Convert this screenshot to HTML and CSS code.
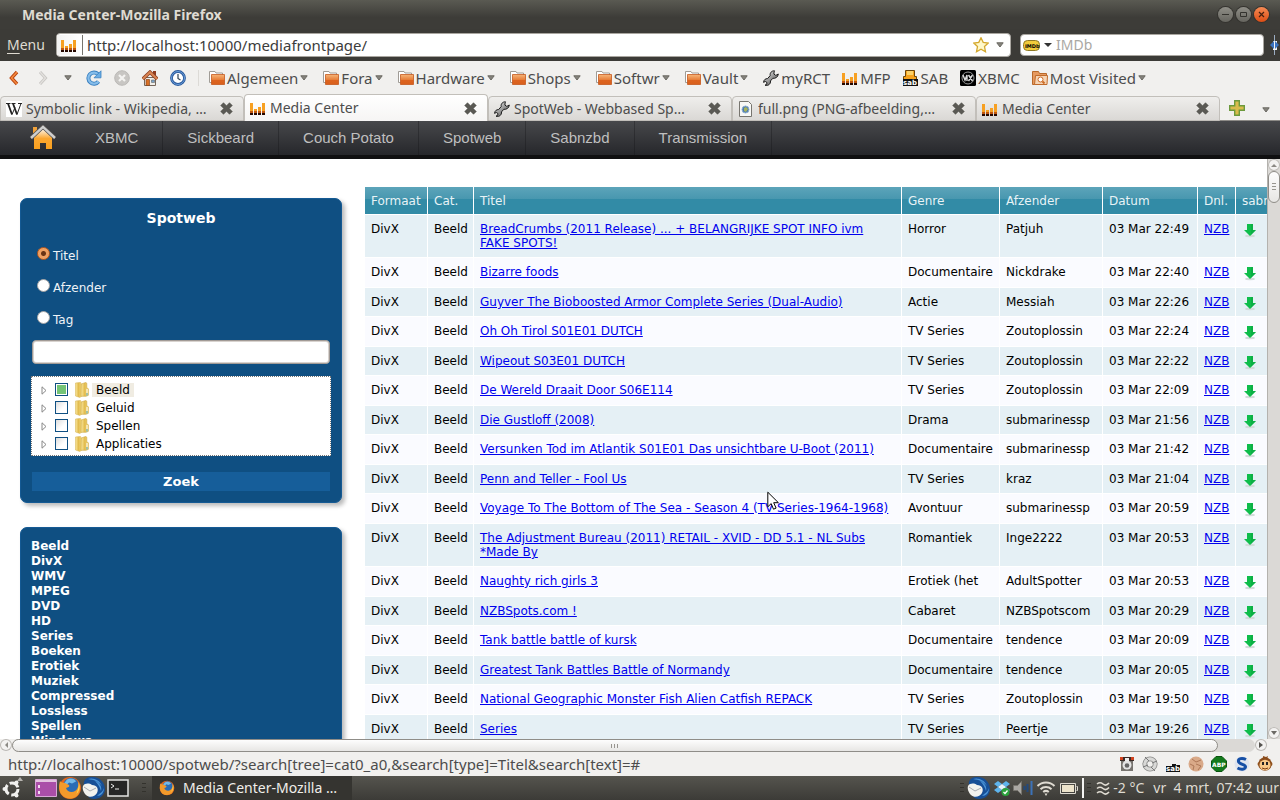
FILE: index.html
```
<!DOCTYPE html>
<html lang="nl">
<head>
    <meta charset="UTF-8">
    <meta name="viewport" content="width=device-width, initial-scale=1.0">
    <title>Media Center</title>
    <link rel="stylesheet" href="styles.css">
</head>
<body>
    <!-- shared icons -->
    <svg class="sprite" aria-hidden="true">
        <defs>
            <linearGradient id="g-folder" x1="0" y1="0" x2="0" y2="1">
                <stop offset="0" stop-color="#f6b67a"/><stop offset=".5" stop-color="#e8813c"/><stop offset=".55" stop-color="#dd6420"/><stop offset="1" stop-color="#d9601c"/>
            </linearGradient>
            <linearGradient id="g-yellow" x1="0" y1="0" x2="1" y2="0">
                <stop offset="0" stop-color="#fbe9a0"/><stop offset=".5" stop-color="#e2bb4d"/><stop offset="1" stop-color="#f3d87c"/>
            </linearGradient>
            <linearGradient id="g-metal" x1="0" y1="0" x2="1" y2="1">
                <stop offset="0" stop-color="#fff"/><stop offset=".5" stop-color="#9a9a9a"/><stop offset="1" stop-color="#444"/>
            </linearGradient>
            <linearGradient id="g-house" x1="0" y1="0" x2="0" y2="1">
                <stop offset="0" stop-color="#fff"/><stop offset=".5" stop-color="#fba731"/><stop offset="1" stop-color="#f9a01e"/>
            </linearGradient>
        </defs>
        <symbol id="i-bars" viewBox="0 0 16 16">
            <path fill="#f7a021" d="M0 3h3v9H0zM4 9h3v3H4zM8 7h3v5H8zM12 3h3v9h-3z"/>
            <path fill="#c0560e" d="M0 11h3v2H0zM4 11h3v2H4zM8 11h3v2H8zM12 11h3v2h-3z"/>
            <path fill="#260800" d="M0 13h3v2H0zM4 13h3v2H4zM8 13h3v2H8zM12 13h3v2h-3z"/>
        </symbol>
        <symbol id="i-folder" viewBox="0 0 16 16">
            <path fill="#fff" stroke="#a09c96" d="M.5 12.500V1.500h5.500l1 1.500h6.500v10z"/>
            <path fill="url(#g-folder)" stroke="#c5581d" stroke-width=".8" d="M2.500 14.500v-10h13v10z"/>
        </symbol>
        <symbol id="i-visited" viewBox="0 0 16 16">
            <path fill="#e69a60" stroke="#b8692b" d="M.5 14.500V1.500h6l1 2h7v2h-2v9z"/>
            <path fill="#f6d4b4" stroke="#c06a2a" d="M2.500 14.500l1-9h12l-.5 9z"/>
            <circle cx="8.500" cy="9.500" r="2.500" fill="#fff" stroke="#cc6b26"/><path stroke="#cc6b26" stroke-width="2" d="M10.500 11.500l2 2"/>
        </symbol>
        <symbol id="i-wrench" viewBox="0 0 16 16">
            <path fill="url(#g-metal)" stroke="#1a1a1a" d="M11.500.8C8.700.6 6.600 3 7.200 5.600L4.600 8.600C2.400 8.500.6 10 .6 12.400l1.700-1 1.700 1.200-.3 1.700-1.700.9c3.400.9 5.700-1.200 5.500-4.300l2.300-2.600c2.700.4 5.200-1.200 5.500-4.300l-2.500 1.400-1.900-1.300.2-2.200z"/>
        </symbol>
        <symbol id="i-close" viewBox="0 0 13 13">
            <path fill="#5a5954" stroke="#45443f" stroke-width=".5" d="M3.500.7l3 3 3-3 2.800 2.800-3 3 3 3-2.800 2.800-3-3-3 3L.7 9.500l3-3-3-3z"/>
        </symbol>
        <symbol id="i-caret" viewBox="0 0 8 6"><path fill="#85837c" stroke="#6b6963" d="M.8.8h6.400L4 5z"/></symbol>
        <symbol id="i-down" viewBox="0 0 12 14">
            <ellipse cx="6" cy="12" rx="5" ry="1.200" fill="#d3dcda"/>
            <path fill="#0fbd4b" d="M3 0h6v6h3l-6 6-6-6h3z"/><path fill="#089d3b" d="M7 0h2v6h3l-5 5z" opacity=".4"/>
        </symbol>
        <symbol id="i-twisty" viewBox="0 0 6 9"><path fill="#fff" stroke="#888" d="M1 .8v7.400l4-3.700z"/></symbol>
        <symbol id="i-book" viewBox="0 0 14 16">
            <path fill="url(#g-yellow)" stroke="#d9b75a" stroke-width=".6" d="M.5 1l5-.6.8 1.500v12.500l-1.500 1L.5 14z"/>
            <path fill="url(#g-yellow)" stroke="#cda63f" stroke-width=".6" d="M6.300 2l4.500-1.600 1 .8v4.600l1.600 1v6.500l-2.400 1H6z"/>
            <path fill="#fff" d="M11.500 7h1v4h-1z"/><path fill="#54b7e8" d="M11.500 11h1v2.500h-1z"/>
        </symbol>
        <symbol id="i-firefox" viewBox="0 0 24 24">
            <circle cx="12" cy="12" r="11" fill="#e2661b"/><circle cx="13" cy="10" r="8" fill="#2a6cb5"/>
            <path fill="#73b8e6" d="M9 3.500c4-2 8-.5 9 2l-4 2-3-1-2 2-3-1z"/>
            <path fill="#f39a2b" d="M2 5c1 2 3 1.500 5 2l4 2c1 2-1 2.500-3 3 1 4 6 5 9 3 3-2 4-6 3-9 3 4 3 10-1 14-5 4-12 3-15-1C1 16 .5 10 2 5z"/>
            <path fill="#ffd553" d="M20.500 6c2 4 1 9-2 12 1-4 3-7 2-12z"/>
        </symbol>
        <symbol id="i-bird" viewBox="0 0 24 24">
            <path fill="#174f96" d="M2 9C1 5 4 1 9 1c8-1 14 5 14 12 0 6-5 10-11 10-3 0-5-1-6-3 6-2 8-5 4-9z"/>
            <path fill="#4a93d6" d="M6 3c5-2 12 1 14 7-4-5-8-6-14-7zM22 12c0 5-3 8-7 8 3-3 6-4 7-8zM13 5c5 2 7 6 6 10-1-4-3-7-6-10z"/>
            <path fill="#f2f2ee" d="M1 10c2-3 6-3 9-1 5 0 7 4 5 8-2 4-8 5-11 2-2-2-4-6-3-9z"/>
            <path fill="none" stroke="#a7aab0" d="M2 11l6 4 6-3"/>
        </symbol>
        <symbol id="i-handle" viewBox="0 0 4 12"><path fill="#33322d" d="M0 1h4v1H0zM0 5h4v1H0zM0 9h4v1H0z"/></symbol>
    </svg>

    <header class="titlebar">
        <h1 class="window-title">Media Center-Mozilla Firefox</h1>
        <div class="window-buttons">
            <button class="win-btn" aria-label="Minimaliseren"><svg viewBox="0 0 15 15"><path stroke="#33322e" d="M4 7.500h7"/></svg></button>
            <button class="win-btn" aria-label="Maximaliseren"><svg viewBox="0 0 15 15"><path fill="none" stroke="#33322e" d="M4.500 5.500h6v4h-6z"/></svg></button>
            <button class="win-btn win-close" aria-label="Sluiten"><svg viewBox="0 0 15 15"><path stroke="#47200f" stroke-width="1.200" d="M5 5l5 5M10 5l-5 5"/></svg></button>
        </div>
    </header>

    <div class="locationbar">
        <button class="menu-btn"><u>M</u>enu</button>
        <div class="url-box">
            <span class="favicon"><svg class="icon"><use href="#i-bars"/></svg></span>
            <input class="url-input" type="text" aria-label="Adres" value="http://localhost:10000/mediafrontpage/">
            <svg class="icon" viewBox="0 0 16 16"><path fill="#fff8c9" stroke="#d4a82e" stroke-width="1.300" d="M8 .8l2.200 4.600 5 .6-3.700 3.500 1 5.200L8 12.300l-4.500 2.400 1-5.200L.8 6l5-.6z"/></svg>
            <svg class="caret"><use href="#i-caret"/></svg>
        </div>
        <div class="search-box">
            <svg class="imdb" viewBox="0 0 17 11"><rect x=".5" y=".5" width="16" height="10" rx="4" fill="#f2cb3b" stroke="#8f7a24"/><text x="2" y="8">IMDb</text></svg>
            <svg class="caret" viewBox="0 0 8 6"><path fill="#333" d="M0 1h8L4 5z"/></svg>
            <input class="search-input" type="text" aria-label="Zoeken" placeholder="IMDb">
        </div>
        <svg class="spinner" viewBox="0 0 9 20"><path stroke="#9cadc2" d="M4.500 0v20"/><path fill="#f5f5f5" d="M3 6h4v9H3z"/><path fill="#3a72c0" d="M0 10l4-4v8zM9 10L5 6v8z"/></svg>
    </div>

    <nav class="bookmarks" aria-label="Bladwijzers">
        <div class="nav-tools">
            <button aria-label="Vorige"><svg class="icon" viewBox="0 0 16 16"><path fill="none" stroke="#b94510" stroke-width="3.400" d="M11 2L5.500 8l5.500 6"/><path fill="none" stroke="#f5893e" stroke-width="1.600" d="M11 2L5.500 8l5.500 6"/></svg></button>
            <button aria-label="Volgende"><svg class="icon" viewBox="0 0 16 16"><path fill="none" stroke="#c8c6c3" stroke-width="3" d="M6 2l5.500 6L6 14"/><path fill="none" stroke="#e3e1de" stroke-width="1.200" d="M6 2l5.500 6L6 14"/></svg></button>
            <button class="history" aria-label="Geschiedenis"><svg class="caret"><use href="#i-caret"/></svg></button>
            <button aria-label="Vernieuwen"><svg class="icon" viewBox="0 0 16 16"><path fill="none" stroke="#3a80c0" stroke-width="4" d="M12.500 11.500A5.600 5.600 0 1 1 12 4.200"/><path fill="none" stroke="#86bdea" stroke-width="2.200" d="M12.500 11.500A5.600 5.600 0 1 1 12 4.200"/><path fill="#6caee4" stroke="#3a80c0" stroke-width=".8" d="M15 .8v7H8z"/></svg></button>
            <button aria-label="Stoppen"><svg class="icon" viewBox="0 0 16 16"><circle cx="8" cy="8" r="7.300" fill="#c8c6c3" stroke="#bbb9b6"/><path stroke="#f4f3f1" stroke-width="2.200" d="M5 5l6 6M11 5l-6 6"/></svg></button>
            <button aria-label="Startpagina"><svg class="icon" viewBox="0 0 16 16"><path fill="#8f3b1e" d="M11 1h3v5h-3z"/><path fill="#f2efe9" stroke="#75675b" d="M2.500 7.500h11v8h-11z"/><path fill="none" stroke="#8b4023" stroke-width="3.600" d="M.8 9L8 2.200 15.200 9"/><path fill="none" stroke="#d98452" stroke-width="2" d="M.8 9L8 2.200 15.200 9"/><path fill="#d87025" stroke="#7c3a14" stroke-width=".6" d="M4 9.500h3.500v6H4z"/><path fill="#78a5cd" stroke="#666" stroke-width=".6" d="M9.500 10h3v2.500h-3z"/></svg></button>
            <button aria-label="Klok"><svg class="icon" viewBox="0 0 16 16"><circle cx="8" cy="8" r="6.500" fill="#fff" stroke="#2a5a9d" stroke-width="2.800"/><circle cx="8" cy="8" r="6.500" fill="none" stroke="#6d9fda"/><path fill="none" stroke="#345" stroke-width="1.200" d="M8 4v4.500l2.500 1.500"/></svg></button>
        </div>
        <div class="bookmark-list">
            <a href="#"><svg class="icon"><use href="#i-folder"/></svg>Algemeen<svg class="caret"><use href="#i-caret"/></svg></a>
            <a href="#"><svg class="icon"><use href="#i-folder"/></svg>Fora<svg class="caret"><use href="#i-caret"/></svg></a>
            <a href="#"><svg class="icon"><use href="#i-folder"/></svg>Hardware<svg class="caret"><use href="#i-caret"/></svg></a>
            <a href="#"><svg class="icon"><use href="#i-folder"/></svg>Shops<svg class="caret"><use href="#i-caret"/></svg></a>
            <a href="#"><svg class="icon"><use href="#i-folder"/></svg>Softwr<svg class="caret"><use href="#i-caret"/></svg></a>
            <a href="#"><svg class="icon"><use href="#i-folder"/></svg>Vault<svg class="caret"><use href="#i-caret"/></svg></a>
            <a href="#"><svg class="icon"><use href="#i-wrench"/></svg>myRCT</a>
            <a href="#"><svg class="icon"><use href="#i-bars"/></svg>MFP</a>
            <a href="#"><svg class="icon" viewBox="0 0 16 16"><path fill="#f6a21c" stroke="#6b4307" d="M2.500.5h9v6h2v3h-13v-3h2z"/><path fill="#fbd168" d="M4 1h6v4H4z"/><path fill="#111" d="M0 9h15v7H0z"/><text class="tiny" x="0" y="15">sab</text></svg>SAB</a>
            <a href="#"><svg class="icon" viewBox="0 0 16 16"><rect width="16" height="16" rx="1.500" fill="#000"/><circle cx="8" cy="8" r="6" fill="none" stroke="#999"/><path fill="none" stroke="#ddd" stroke-width="1.400" d="M3 5l2 5 2-5v6M8.500 5l4 6M12.500 5l-4 6"/></svg>XBMC</a>
            <a href="#"><svg class="icon"><use href="#i-visited"/></svg>Most Visited<svg class="caret"><use href="#i-caret"/></svg></a>
        </div>
    </nav>

    <div class="tabs" role="tablist">
        <div class="tab" role="tab"><svg class="icon" viewBox="0 0 16 16"><path fill="#fff" d="M0 0h16v16H0z"/><path fill="none" stroke="#222" stroke-width="1.800" d="M2 2.500l4 11M7 2.500l4 11"/><path fill="none" stroke="#222" d="M6 13.500l3-7M11 13.500l4-11M0 2.500h4.500M5.500 2.500h4M12 2.500h4"/></svg><span>Symbolic link - Wikipedia, …</span><button aria-label="Sluit tab"><svg><use href="#i-close"/></svg></button></div>
        <div class="tab active" role="tab" aria-selected="true"><svg class="icon"><use href="#i-bars"/></svg><span>Media Center</span><button aria-label="Sluit tab"><svg><use href="#i-close"/></svg></button></div>
        <div class="tab" role="tab"><svg class="icon"><use href="#i-wrench"/></svg><span>SpotWeb - Webbased Sp…</span><button aria-label="Sluit tab"><svg><use href="#i-close"/></svg></button></div>
        <div class="tab" role="tab"><svg class="icon" viewBox="0 0 16 16"><path fill="#f8f8f6" stroke="#77756f" d="M1.500.5h9l3 3v12h-12z"/><circle cx="7.500" cy="8.500" r="3.500" fill="#4a78ae" stroke="#8fb0d2"/><path fill="#a9b45a" d="M6 7l2-1 2 2-2 3-2-1z"/></svg><span>full.png (PNG-afbeelding,…</span><button aria-label="Sluit tab"><svg><use href="#i-close"/></svg></button></div>
        <div class="tab" role="tab"><svg class="icon"><use href="#i-bars"/></svg><span>Media Center</span><button aria-label="Sluit tab"><svg><use href="#i-close"/></svg></button></div>
        <button class="new-tab" aria-label="Nieuwe tab"><svg class="icon" viewBox="0 0 16 16"><path fill="#d9bc4c" stroke="#6c9a3c" stroke-width="1.400" d="M5.700.7h4.600v5h5v4.600h-5v5H5.700v-5h-5V5.700h5z"/></svg></button>
        <button class="all-tabs" aria-label="Alle tabs"><svg class="caret"><use href="#i-caret"/></svg></button>
    </div>

    <nav class="sitenav" aria-label="Hoofdmenu">
        <a class="home" href="#" aria-label="Home"><svg viewBox="0 0 26 24"><path fill="#f0a23a" d="M3 2h4v6H3z"/><path fill="url(#g-house)" d="M13 3l9 9v12h-6v-6h-6v6H4V12z"/><path fill="none" stroke="#55524f" stroke-width="4" d="M1 13L13 1.800 25 13"/><path fill="none" stroke="#cfcfcf" stroke-width="2.400" d="M1 13L13 1.800 25 13"/></svg></a>
        <a href="#">XBMC</a>
        <a href="#">Sickbeard</a>
        <a href="#">Couch Potato</a>
        <a href="#">Spotweb</a>
        <a href="#">Sabnzbd</a>
        <a href="#">Transmission</a>
    </nav>

    <div class="viewport">
        <div class="page">
            <aside class="sidebar">
                <form class="panel search-panel" onsubmit="return false">
                    <h2>Spotweb</h2>
                    <label class="choice"><input type="radio" name="type" checked>Titel</label>
                    <label class="choice"><input type="radio" name="type">Afzender</label>
                    <label class="choice"><input type="radio" name="type">Tag</label>
                    <input class="text" type="text" aria-label="Zoektekst">
                    <div class="tree">
                        <label class="node selected"><svg class="twisty"><use href="#i-twisty"/></svg><input type="checkbox" class="partial"><svg class="book"><use href="#i-book"/></svg><span>Beeld</span></label>
                        <label class="node"><svg class="twisty"><use href="#i-twisty"/></svg><input type="checkbox"><svg class="book"><use href="#i-book"/></svg><span>Geluid</span></label>
                        <label class="node"><svg class="twisty"><use href="#i-twisty"/></svg><input type="checkbox"><svg class="book"><use href="#i-book"/></svg><span>Spellen</span></label>
                        <label class="node"><svg class="twisty"><use href="#i-twisty"/></svg><input type="checkbox"><svg class="book"><use href="#i-book"/></svg><span>Applicaties</span></label>
                    </div>
                    <button class="submit">Zoek</button>
                </form>
                <ul class="panel filters">
                    <li><a href="#">Beeld</a></li>
                    <li><a href="#">DivX</a></li>
                    <li><a href="#">WMV</a></li>
                    <li><a href="#">MPEG</a></li>
                    <li><a href="#">DVD</a></li>
                    <li><a href="#">HD</a></li>
                    <li><a href="#">Series</a></li>
                    <li><a href="#">Boeken</a></li>
                    <li><a href="#">Erotiek</a></li>
                    <li><a href="#">Muziek</a></li>
                    <li><a href="#">Compressed</a></li>
                    <li><a href="#">Lossless</a></li>
                    <li><a href="#">Spellen</a></li>
                    <li><a href="#">Windows</a></li>
                </ul>
            </aside>

            <main class="spots">
                <table>
                    <colgroup>
                        <col class="c-format"><col class="c-cat"><col class="c-title"><col class="c-genre"><col class="c-sender"><col class="c-date"><col class="c-nzb"><col class="c-sab">
                    </colgroup>
                    <thead>
                        <tr><th>Formaat</th><th>Cat.</th><th>Titel</th><th>Genre</th><th>Afzender</th><th>Datum</th><th>Dnl.</th><th>sabnzbd</th></tr>
                    </thead>
                    <tbody id="spots"></tbody>
                </table>
            </main>
        </div>
        <div class="vscroll">
            <svg class="arrow" viewBox="0 0 12 12"><path fill="#8c8a85" d="M3 8h6L6 5z"/></svg>
            <div class="thumb"><svg viewBox="0 0 8 8"><path stroke="#97958f" d="M2 .5h4M2 3.500h4M2 6.500h4"/></svg></div>
            <svg class="arrow end" viewBox="0 0 12 12"><path fill="#6c6a65" d="M3 4h6L6 8z"/></svg>
        </div>
    </div>
    <div class="hscroll">
        <svg class="arrow" viewBox="0 0 12 12"><path fill="#8c8a85" d="M8 3v6L5 6z"/></svg>
        <div class="track"><div class="thumb"><svg viewBox="0 0 8 8"><path stroke="#97958f" d="M.5 2v4M3.500 2v4M6.500 2v4"/></svg></div></div>
        <svg class="arrow end" viewBox="0 0 12 12"><path fill="#55534f" d="M4 3v6l4-3z"/></svg>
    </div>

    <div class="statusbar">
        <span>http://localhost:10000/spotweb/?search[tree]=cat0_a0,&amp;search[type]=Titel&amp;search[text]=#</span>
        <div class="addons">
            <svg viewBox="0 0 16 16"><path fill="#77746f" d="M2 3h12v12H2z"/><path fill="#3a2a26" d="M1 1h14v4H1z"/><path fill="#d0421f" d="M1 1h3v3H1zM12 1h3v3h-3z"/><circle cx="8" cy="9" r="4.500" fill="#e4e4e4"/><circle cx="8" cy="9.500" r="2.300" fill="#666"/><path fill="#eee" d="M6 2h4v3H6z"/></svg>
            <svg viewBox="0 0 16 16"><circle cx="8" cy="8" r="5.200" fill="none" stroke="#8a8a88" stroke-width="4.800"/><circle cx="8" cy="8" r="5.200" fill="none" stroke="#d9d9d7" stroke-width="3.200"/><path stroke="#777" d="M3 1l4 4M13 15l-4-4M1 11l5-2M15 5l-5 2"/></svg>
            <svg viewBox="0 0 16 16"><path fill="#111" d="M1 10h6V8h4v1h4v7H1z"/><text class="tiny" x="1" y="15">sab</text></svg>
            <svg viewBox="0 0 16 16"><circle cx="8" cy="8" r="7.500" fill="#d9a988"/><path fill="none" stroke="#ad7757" d="M4 3l4 3 5-2M2 8l4 2-1 4M8 8l5 2-3 4"/></svg>
            <svg viewBox="0 0 16 16"><path fill="#137a1c" stroke="#09540f" d="M5 .5h6L15.500 5v6L11 15.500H5L.5 11V5z"/><text class="abp" x="1" y="11">ABP</text></svg>
            <svg viewBox="0 0 16 16"><circle cx="8" cy="8" r="7.500" fill="#dfe4ee"/><path fill="none" stroke="#164fa5" stroke-width="3" d="M12 3.500C8 1.500 4 2.500 4.500 5.500S12 8.500 11.500 11 7 14 3.500 12"/></svg>
            <svg viewBox="0 0 16 16"><circle cx="2.500" cy="8" r="2" fill="#9a5a22"/><circle cx="13.500" cy="8" r="2" fill="#9a5a22"/><circle cx="8" cy="8" r="6.800" fill="#8c4d1c"/><ellipse cx="8" cy="9" rx="5.500" ry="5.200" fill="#f7c887"/><path fill="#222" d="M5 6h2v3H5zM9 6h2v3H9z"/><path fill="none" stroke="#7a3b10" d="M5 12q3 2 6 0"/><path fill="#8c4d1c" d="M6 0l3 1 2-1-1 3H6z"/></svg>
        </div>
    </div>

    <footer class="taskbar">
        <button class="launcher" aria-label="Ubuntu"><svg viewBox="0 0 24 24"><circle cx="12" cy="13" r="6" fill="none" stroke="#f0f0ee" stroke-width="3" stroke-dasharray="10 2.560"/><circle cx="4.500" cy="13" r="2" fill="#f0f0ee"/><circle cx="16.500" cy="6.500" r="2" fill="#f0f0ee"/><circle cx="16.500" cy="19.500" r="2" fill="#f0f0ee"/><path fill="#b7b5b0" d="M17 5l3-4 3 4z"/></svg></button>
        <button class="launcher" aria-label="Bestanden"><svg viewBox="0 0 24 24"><path fill="#aa4ea8" stroke="#d8a7d7" d="M1.500 3.500h21v17h-21z"/><path fill="#e3c4e0" d="M2 4h20v2H2z"/><path fill="#f0d8ee" d="M4 9h2v3H4zM4 15h2v3H4z"/></svg></button>
        <button class="launcher" aria-label="Firefox"><svg><use href="#i-firefox"/></svg></button>
        <button class="launcher" aria-label="Thunderbird"><svg><use href="#i-bird"/></svg></button>
        <button class="launcher" aria-label="Terminal"><svg viewBox="0 0 24 24"><path fill="#262626" stroke="#e4e4e2" stroke-width="1.500" d="M2 4h20v16H2z"/><path fill="none" stroke="#eee" d="M5 8l3 2-3 2M9 13h4"/></svg></button>
        <svg class="handle"><use href="#i-handle"/></svg>
        <button class="task"><svg class="icon"><use href="#i-firefox"/></svg><span>Media Center-Mozilla …</span></button>
        <div class="tray">
            <svg class="handle"><use href="#i-handle"/></svg>
            <svg class="big"><use href="#i-bird"/></svg>
            <svg class="icon" viewBox="0 0 16 16"><path fill="#5eb5ee" d="M4 1l4 3-4 3-4-3zM12 1l4 3-4 3-4-3zM4 7l4 3-4 3-4-3zM12 7l4 3-4 3-4-3z"/><path fill="#e8f5fd" d="M8 4l4 3-4 3-4-3z"/><circle cx="11.500" cy="12" r="4" fill="#2aa33b"/><path fill="none" stroke="#fff" stroke-width="1.300" d="M9.500 12l1.500 1.500 2.500-3"/></svg>
            <svg class="wide" viewBox="0 0 20 16"><path fill="#aaa8a3" stroke="#77756f" d="M.5 5.500h4l4-4v13l-4-4h-4z"/><path stroke="#22497c" stroke-width="2" d="M11.500 6v4M14.500 4v8"/><path stroke="#3c72b8" stroke-width="2" d="M18.500 1v14"/></svg>
            <svg class="wide" viewBox="0 0 20 16"><path fill="none" stroke="#dfdbd2" stroke-width="2" d="M1.500 6a12 12 0 0 1 17 0M4.500 9.200a8 8 0 0 1 11 0M7.200 12a4.500 4.500 0 0 1 5.600 0"/><path fill="#dfdbd2" d="M8.500 13.500h3L10 16z"/></svg>
            <svg class="wide" viewBox="0 0 20 16"><path fill="#ece3cb" d="M3 5h12v7H3z"/><path fill="none" stroke="#dfdbd2" d="M1.500 3.500h15v10h-15zM17.500 6.500h1v4h-1"/></svg>
            <span class="marker"></span>
            <svg class="handle"><use href="#i-handle"/></svg>
            <svg class="waves" viewBox="0 0 14 14"><path fill="none" stroke="#dfdbd2" stroke-width="1.600" d="M1 3q3-2.500 6 0t6-1M1 7.500q3-2.500 6 0t6-1M1 12q3-2.500 6 0t6-1"/></svg>
            <span>-2 °C</span>
            <time class="clock">vr&nbsp; 4 mrt, 07:42 uur</time>
        </div>
    </footer>

    <svg class="cursor" viewBox="0 0 12 20"><path fill="#fff" stroke="#000" d="M.8 1.200v14.600l3.400-3.200 2.300 5.600 2.600-1.100-2.400-5.400h4.700z"/></svg>

    <script>
        // titel, genre, afzender, tijd
        const spots = [
            ['BreadCrumbs (2011 Release) ... + BELANGRIJKE SPOT INFO ivm FAKE SPOTS!', 'Horror', 'Patjuh', '22:49'],
            ['Bizarre foods', 'Documentaire', 'Nickdrake', '22:40'],
            ['Guyver The Bioboosted Armor Complete Series (Dual-Audio)', 'Actie', 'Messiah', '22:26'],
            ['Oh Oh Tirol S01E01 DUTCH', 'TV Series', 'Zoutoplossin', '22:24'],
            ['Wipeout S03E01 DUTCH', 'TV Series', 'Zoutoplossin', '22:22'],
            ['De Wereld Draait Door S06E114', 'TV Series', 'Zoutoplossin', '22:09'],
            ['Die Gustloff (2008)', 'Drama', 'submarinessp', '21:56'],
            ['Versunken Tod im Atlantik S01E01 Das unsichtbare U-Boot (2011)', 'Documentaire', 'submarinessp', '21:42'],
            ['Penn and Teller - Fool Us', 'TV Series', 'kraz', '21:04'],
            ['Voyage To The Bottom of The Sea - Season 4 (TV Series-1964-1968)', 'Avontuur', 'submarinessp', '20:59'],
            ['The Adjustment Bureau (2011) RETAIL - XVID - DD 5.1 - NL Subs *Made By', 'Romantiek', 'Inge2222', '20:53'],
            ['Naughty rich girls 3', 'Erotiek (het', 'AdultSpotter', '20:53'],
            ['NZBSpots.com !', 'Cabaret', 'NZBSpotscom', '20:29'],
            ['Tank battle battle of kursk', 'Documentaire', 'tendence', '20:09'],
            ['Greatest Tank Battles Battle of Normandy', 'Documentaire', 'tendence', '20:05'],
            ['National Geographic Monster Fish Alien Catfish REPACK', 'TV Series', 'Zoutoplossin', '19:50'],
            ['Series', 'TV Series', 'Peertje', '19:26']
        ];
        const tableBody = document.getElementById('spots');

        spots.forEach(([title, genre, sender, time]) => {
            const row = document.createElement('tr');
            row.innerHTML = `
                <td>DivX</td>
                <td>Beeld</td>
                <td><a href="#">${title}</a></td>
                <td>${genre}</td>
                <td>${sender}</td>
                <td>03 Mar ${time}</td>
                <td><a href="#">NZB</a></td>
                <td><a href="#" aria-label="Download"><svg class="dl"><use href="#i-down"/></svg></a></td>
            `;
            tableBody.appendChild(row);
        });
    </script>
</body>
</html>
```

FILE: styles.css
```
* {
    box-sizing: border-box;
}
body {
    display: flex;
    flex-direction: column;
    height: 100vh;
    margin: 0;
    overflow: hidden;
    font-family: "Noto Sans", "Open Sans", sans-serif;
    font-size: 14px;
    line-height: 20px;
    color: #4c4c4c;
    background: #fff;
}
button {
    display: flex;
    align-items: center;
    padding: 0;
    border: none;
    background: none;
    font: inherit;
    color: inherit;
}
svg {
    display: block;
    flex: none;
}
.sprite {
    position: absolute;
    width: 0;
    height: 0;
}
.icon {
    width: 16px;
    height: 16px;
}
.caret {
    width: 8px;
    height: 6px;
}
.tiny {
    font: bold 7px "DejaVu Sans", sans-serif;
    fill: #fff;
}

/* window */
.titlebar {
    display: flex;
    flex: none;
    align-items: center;
    justify-content: space-between;
    height: 29px;
    padding: 0 11px 0 22px;
    background: linear-gradient(#5a5a52, #3d3c38 60%);
}
.window-title {
    margin: 0;
    font-size: 14px;
    color: #dfdbd2;
}
.window-buttons {
    display: flex;
    gap: 3px;
}
.win-btn {
    width: 15px;
    height: 15px;
    border-radius: 50%;
    background: linear-gradient(#8f8e87, #66655f);
    box-shadow: 0 0 0 1px #34332f;
}
.win-close {
    background: linear-gradient(#f58a54, #dd4d14);
}
.locationbar {
    display: flex;
    flex: none;
    align-items: center;
    height: 32px;
    padding-left: 7px;
    background: #3c3b37;
}
.menu-btn {
    width: 49px;
    color: #dfdbd2;
}
.menu-btn u {
    text-underline-offset: 3px;
}
.url-box,
.search-box {
    display: flex;
    align-items: center;
    background: #fff;
    border: 1px solid #a9a6a0;
    border-radius: 4px;
}
.url-box {
    flex: 1;
    gap: 7px;
    height: 24px;
    padding-right: 6px;
}
.favicon {
    padding: 2px 5px 2px 4px;
    border-right: 1px solid #77756f;
    background: linear-gradient(90deg, #f2f2f1, #fff);
}
.url-input,
.search-input {
    flex: 1;
    min-width: 0;
    padding: 0;
    border: none;
    outline: none;
    background: none;
    font: inherit;
    color: #3c3c3c;
}
.url-input {
    margin-left: -3px;
    font-size: 15px;
}
.search-input::placeholder {
    color: #aaa8a3;
}
.search-box {
    flex: 0 1 244px;
    gap: 4px;
    height: 22px;
    margin: 0 6px 0 9px;
    padding-left: 2px;
}
.imdb {
    width: 17px;
    height: 11px;
}
.imdb text {
    font: bold 5px "DejaVu Sans", sans-serif;
}
.spinner {
    width: 9px;
    height: 20px;
    margin-right: 1px;
}

/* bookmarks */
.bookmarks {
    display: flex;
    flex: none;
    align-items: center;
    height: 33px;
    padding-left: 6px;
    background: #f1f0ee;
    font-size: 15px;
}
.nav-tools {
    display: flex;
    align-items: center;
    gap: 12px;
    padding-right: 12px;
    border-right: 1px solid #dcdad6;
}
.history {
    padding: 0 2px;
}
.bookmark-list {
    display: flex;
    gap: 12px;
    padding-left: 10px;
    white-space: nowrap;
}
.bookmark-list a {
    display: flex;
    align-items: center;
    gap: 2px;
    color: inherit;
    text-decoration: none;
}
.bookmark-list .caret {
    margin-right: 3px;
}

/* tabs */
.tabs {
    display: flex;
    flex: none;
    align-items: flex-end;
    height: 27px;
    background: #f1f0ee;
    box-shadow: inset 0 -1px #8c8a86;
}
.tab {
    display: flex;
    flex: 0 1 244px;
    align-items: center;
    gap: 4px;
    min-width: 0;
    height: 25px;
    padding: 0 10px 0 5px;
    border: 1px solid #c2bfba;
    border-radius: 4px 4px 0 0;
    background: linear-gradient(#efeeec, #dad8d5);
}
.tab.active {
    height: 27px;
    border-bottom: none;
    background: linear-gradient(#fff, #f6f5f4);
}
.tab span {
    flex: 1;
    overflow: hidden;
    text-overflow: ellipsis;
    white-space: nowrap;
}
.tab button svg {
    width: 13px;
    height: 13px;
}
.new-tab {
    height: 27px;
    margin-left: 9px;
}
.all-tabs {
    height: 23px;
    margin-left: 17px;
}

/* site menu */
.sitenav {
    display: flex;
    flex: none;
    height: 38px;
    padding-left: 30px;
    border-bottom: 4px solid #101011;
    background: linear-gradient(#47484b, #26272b);
    font: 15px/34px "Liberation Sans", Arial, sans-serif;
}
.sitenav a {
    padding: 0 24px;
    border-right: 1px solid rgba(20, 20, 24, 0.35);
    color: #bfbfbf;
    text-decoration: none;
}
.sitenav .home {
    padding: 4px 15px 0 0;
    border: none;
}
.home svg {
    width: 26px;
    height: 24px;
}

/* page */
.viewport {
    display: flex;
    flex: 1;
    min-height: 0;
    font: 12px/14px "DejaVu Sans", Verdana, sans-serif;
    color: #000;
}
.page {
    display: flex;
    flex: 1;
    gap: 23px;
    min-width: 0;
    padding-left: 20px;
    overflow: hidden;
}
.sidebar {
    flex: 0 0 322px;
    padding-top: 39px;
}
.panel {
    margin: 0 0 24px;
    padding: 11px;
    border: 1px solid #155a94;
    border-radius: 7px;
    background: #0f4f82;
    box-shadow: 3px 3px 4px #bbb;
    color: #fff;
}
.search-panel h2 {
    margin: 0 0 21px;
    font-size: 14px;
    line-height: 16px;
    text-align: center;
}
.choice {
    display: flex;
    gap: 3px;
    height: 32px;
    padding: 2px 5px;
    color: #eef3f7;
}
.choice input {
    appearance: none;
    width: 13px;
    height: 13px;
    margin: -2px 0 0;
    border: 1px solid #a5a5a5;
    border-radius: 50%;
    background: #fff;
}
.choice input:checked {
    border-color: #b85a1e;
    background: radial-gradient(#6b3415 0 2px, #f0a062 3px);
}
.search-panel .text {
    width: 100%;
    height: 24px;
    margin: -3px 0 12px;
    border: 1px solid #a29b96;
    border-radius: 4px;
    background: #fff;
    box-shadow: inset 0 0 0 1px #d8d3cf;
}
.tree {
    margin: 0 -1px 16px;
    padding: 4px 9px 2px;
    border: 1px dotted #777;
    background: #fff;
    color: #000;
}
.node {
    display: flex;
    align-items: center;
    height: 18px;
}
.twisty {
    width: 6px;
    height: 9px;
}
.node input {
    appearance: none;
    width: 13px;
    height: 13px;
    margin: 0 7px 2px 8px;
    border: 1px solid #0f4f82;
    background: linear-gradient(135deg, #ddd, #fff 60%);
}
.node .partial {
    background: #74c476;
    box-shadow: inset 0 0 0 1px #fff;
}
.book {
    width: 14px;
    height: 16px;
}
.node span {
    margin-left: 3px;
    padding: 0 4px;
}
.selected span {
    background: #f0ece2;
}
.submit {
    justify-content: center;
    width: 100%;
    height: 19px;
    background: #165e9a;
    font-size: 13px;
    font-weight: bold;
}
.filters {
    padding: 11px 10px;
    list-style: none;
    font-weight: bold;
    line-height: 15px;
}
.filters a {
    color: #fff;
    text-decoration: none;
}
.spots {
    flex: 1;
    min-width: 0;
    padding-top: 28px;
}
table {
    width: 100%;
    min-width: 942px;
    table-layout: fixed;
    border-collapse: separate;
    border-spacing: 0;
}
.c-format { width: 63px; }
.c-cat { width: 46px; }
.c-genre { width: 98px; }
.c-sender { width: 103px; }
.c-date { width: 95px; }
.c-nzb { width: 38px; }
.c-sab { width: 71px; }
th, td {
    padding: 7px 6px;
    border-right: 1px solid #fff;
    border-bottom: 1px solid #fff;
    text-align: left;
    vertical-align: top;
    white-space: nowrap;
}
th {
    padding-bottom: 6px;
    background: linear-gradient(#5ca4ba, #4897af 12px, #328ba6 12px, #328ba6);
    font-weight: normal;
    color: #e8f3f6;
}
td {
    background: #fafbff;
}
tr:nth-child(odd) td {
    background: #e5f0f5;
}
tr:nth-child(even) td {
    padding-bottom: 8px;
}
td:nth-child(3) {
    white-space: normal;
}
td a {
    color: #0000ee;
}
.dl {
    width: 12px;
    height: 14px;
    margin: 2px 0 -2px 2px;
}

/* scrollbars */
.vscroll {
    display: flex;
    flex: 0 0 13px;
    flex-direction: column;
    background: #dbd9d6;
    border-left: 1px solid #b4b2ae;
}
.arrow {
    width: 12px;
    height: 12px;
    border-radius: 6px;
    background: #f3f2f1;
    box-shadow: inset 0 0 0 1px #bbb9b5;
}
.thumb {
    display: flex;
    align-items: center;
    justify-content: center;
    border: 1px solid #8f8d88;
    border-radius: 7px;
    background: linear-gradient(#fdfdfd, #e7e6e4);
}
.thumb svg {
    width: 8px;
    height: 8px;
}
.vscroll .thumb {
    height: 32px;
}
.vscroll .end {
    margin-top: auto;
}
.hscroll {
    display: flex;
    flex: none;
    height: 13px;
    padding-right: 13px;
    background: #f1f0ee;
}
.track {
    flex: 1;
    border-radius: 7px;
    background: #dbd9d6;
}
.hscroll .thumb {
    width: 97%;
    height: 13px;
}

/* status bar */
.statusbar {
    display: flex;
    flex: none;
    align-items: center;
    justify-content: space-between;
    height: 24px;
    padding: 0 7px 0 8px;
    background: #f1f0ee;
    font-size: 15px;
}
.addons {
    display: flex;
    gap: 7px;
}
.addons svg {
    width: 16px;
    height: 16px;
}
.abp {
    font: bold 6px "DejaVu Sans", sans-serif;
    fill: #fff;
}

/* task bar */
.taskbar {
    display: flex;
    flex: none;
    align-items: center;
    height: 24px;
    background: linear-gradient(#55544e, #3c3b37);
    color: #f0eee9;
}
.launcher svg,
.big {
    width: 24px;
    height: 24px;
}
.launcher:first-child {
    margin-right: 10px;
}
.handle {
    width: 4px;
    height: 12px;
}
.taskbar > .handle {
    margin: 0 6px 0 12px;
}
.task {
    flex: 0 1 200px;
    gap: 8px;
    height: 24px;
    min-width: 0;
    padding: 0 7px;
    background: #353430;
}
.task span {
    overflow: hidden;
    text-overflow: ellipsis;
    white-space: nowrap;
}
.tray {
    display: flex;
    align-items: center;
    gap: 3px;
    margin-left: auto;
    padding-right: 1px;
    white-space: nowrap;
    color: #dfdbd2;
}
.wide {
    width: 20px;
    height: 16px;
}
.marker {
    width: 2px;
    height: 20px;
    background: #f4f4f2;
}
.waves {
    width: 14px;
    height: 14px;
    margin-left: 2px;
}
.clock {
    margin-left: 6px;
}
.cursor {
    position: absolute;
    left: 767px;
    top: 491px;
    width: 12px;
    height: 20px;
}
```
